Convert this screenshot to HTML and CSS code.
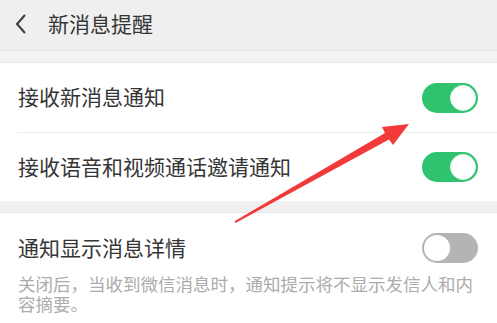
FILE: index.html
```html
<!DOCTYPE html>
<html lang="zh">
<head>
<meta charset="utf-8">
<link rel="stylesheet" href="styles.css">
</head>
<body>
<div class="page">
  <header class="topbar">
    <svg class="back" width="14" height="22" viewBox="0 0 14 22"><path d="M11 2 L3 11 L11 20" fill="none" stroke="#3a3a3a" stroke-width="2"/></svg>
    <span class="title">新消息提醒</span>
  </header>
  <div class="gap first"></div>
  <section class="group">
    <div class="row">
      <span class="label">接收新消息通知</span>
      <span class="switch on"><span class="knob"></span></span>
    </div>
    <div class="row divided">
      <span class="label">接收语音和视频通话邀请通知</span>
      <span class="switch on"><span class="knob"></span></span>
    </div>
  </section>
  <div class="gap"></div>
  <section class="group">
    <div class="row tall">
      <span class="label">通知显示消息详情</span>
      <span class="switch off"><span class="knob"></span></span>
    </div>
    <p class="desc">关闭后，当收到微信消息时，通知提示将不显示发信人和内容摘要。</p>
  </section>
  <svg class="arrow" width="497" height="323" viewBox="0 0 497 323">
    <polygon fill="#f23a3a" points="234.5,221.2 385,133 382,127 409,124 393,145 389,139.5 235.5,223"/>
  </svg>
</div>
</body>
</html>
```

FILE: styles.css
```css
html, body {
  margin: 0;
  padding: 0;
  background: #ffffff;
}
.page {
  position: relative;
  width: 497px;
  height: 323px;
  overflow: hidden;
  font-family: "Noto Sans CJK SC", "Noto Sans", sans-serif;
  background: #ffffff;
}
.topbar {
  height: 51px;
  background: #efefef;
  display: flex;
  align-items: center;
  padding-left: 14px;
  box-sizing: border-box;
  border-bottom: 1px solid #e4e4e4;
}
.back {
  display: block;
  margin-right: 20px;
  margin-top: -2px;
}
.title {
  font-size: 21px;
  color: #353535;
  line-height: 1;
  margin-top: -4px;
}
.gap {
  height: 11px;
  background: #f0f0f0;
  border-bottom: 1px solid #e6e6e6;
}
.gap.first {
  background: #f3f3f3;
}
.group {
  background: #fff;
}
.row {
  height: 69px;
  display: flex;
  align-items: center;
  justify-content: space-between;
  padding: 0 19px 0 18px;
  box-sizing: border-box;
  position: relative;
}
.row.divided {
  border-top: 1px solid #ececec;
  margin-left: 17px;
  padding-left: 1px;
  height: 69px;
}
.row.tall {
  height: 64px;
  padding-top: 5px;
  padding-bottom: 0;
}
.row.tall .label {
  margin-top: 0;
}
.label {
  font-size: 21px;
  color: #353535;
  line-height: 1;
  margin-top: -2px;
}
.switch {
  width: 56px;
  height: 30px;
  border-radius: 15px;
  box-sizing: border-box;
  display: flex;
  align-items: center;
  padding: 2px;
}
.switch .knob {
  width: 26px;
  height: 26px;
  border-radius: 50%;
  background: #fff;
  box-sizing: border-box;
}
.switch.on {
  background: #2fc26f;
  justify-content: flex-end;
}
.switch.on .knob {
  border: 1px solid #e8f6ee;
}
.switch.off {
  background: #b4b4b4;
  justify-content: flex-start;
}
.desc {
  margin: -6px 0 0 0;
  padding: 3px 20px 0 18px;
  font-size: 17.5px;
  line-height: 20px;
  color: #ababab;
}
.arrow {
  position: absolute;
  left: 0;
  top: 0;
  pointer-events: none;
}
```
